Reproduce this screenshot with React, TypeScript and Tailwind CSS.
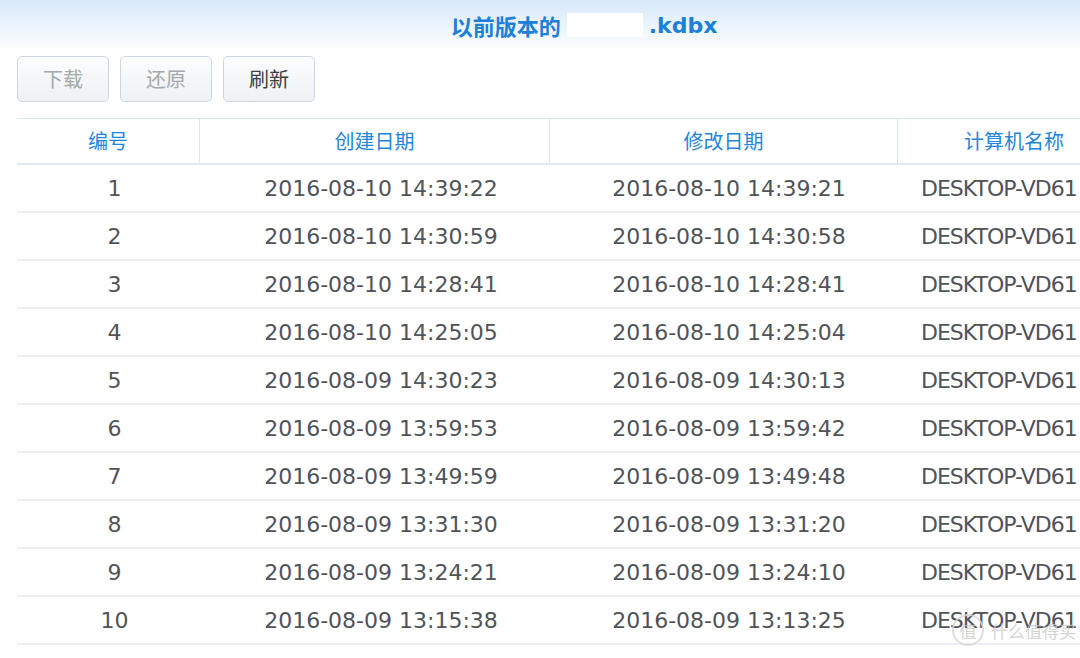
import React from 'react';

const rows = [
  ['1', '2016-08-10 14:39:22', '2016-08-10 14:39:21'],
  ['2', '2016-08-10 14:30:59', '2016-08-10 14:30:58'],
  ['3', '2016-08-10 14:28:41', '2016-08-10 14:28:41'],
  ['4', '2016-08-10 14:25:05', '2016-08-10 14:25:04'],
  ['5', '2016-08-09 14:30:23', '2016-08-09 14:30:13'],
  ['6', '2016-08-09 13:59:53', '2016-08-09 13:59:42'],
  ['7', '2016-08-09 13:49:59', '2016-08-09 13:49:48'],
  ['8', '2016-08-09 13:31:30', '2016-08-09 13:31:20'],
  ['9', '2016-08-09 13:24:21', '2016-08-09 13:24:10'],
  ['10', '2016-08-09 13:15:38', '2016-08-09 13:13:25'],
];

const cjk = "font-['Noto_Sans_CJK_SC',sans-serif]";
const num = "font-['DejaVu_Sans','Noto_Sans_CJK_SC',sans-serif]";

const Btn: React.FC<{ label: string; disabled?: boolean }> = ({ label, disabled }) => (
  <button
    className={`w-[92px] h-[46px] rounded-[5px] border border-[#cdd6df] bg-gradient-to-b from-[#fbfcfd] to-[#eef2f5] text-[20px] ${cjk} ${
      disabled ? 'text-[#a3a8ad]' : 'text-[#3a3f44]'
    }`}
  >
    {label}
  </button>
);

export default function App() {
  return (
    <div className="relative w-[1080px] h-[658px] overflow-hidden bg-white">
      {/* title */}
      <div className="h-[52px] bg-gradient-to-b from-[#d7e8f8] to-white flex items-center justify-center">
        <div className={`text-[22px] font-bold text-[#1d80d8] flex items-center ${cjk} ml-[88px] -mt-[2px]`}>
          <span>以前版本的</span>
          <span className="inline-block w-[76px] h-[24px] bg-white mx-[6px]"></span>
          <span className={num}>.kdbx</span>
        </div>
      </div>

      {/* toolbar */}
      <div className="flex gap-[11px] pl-[17px] mt-[4px]">
        <Btn label="下载" disabled />
        <Btn label="还原" disabled />
        <Btn label="刷新" />
      </div>

      {/* table */}
      <div className="ml-[17px] mt-[16px] w-[1300px] border-t border-[#dfe7ef]">
        <div className={`flex h-[46px] border-b-2 border-[#e3e9ef] text-[20px] text-[#1f86dc] ${cjk}`}>
          <div className="w-[183px] flex items-center justify-center border-r border-[#d9e5f1]">编号</div>
          <div className="w-[350px] flex items-center justify-center border-r border-[#d9e5f1]">创建日期</div>
          <div className="w-[348px] flex items-center justify-center border-r border-[#d9e5f1]">修改日期</div>
          <div className="w-[232px] flex items-center justify-center">计算机名称</div>
        </div>
        {rows.map((r) => (
          <div key={r[0]} className={`flex h-[48px] border-b-2 border-[#eceff3] text-[22px] text-[#505357] ${num}`}>
            <div className="w-[183px] flex items-center justify-center pl-[12px]">{r[0]}</div>
            <div className="w-[350px] flex items-center justify-center pl-[12px]">{r[1]}</div>
            <div className="w-[348px] flex items-center justify-center pl-[10px]">{r[2]}</div>
            <div className="w-[232px] flex items-center pl-[23px] whitespace-nowrap tracking-[-1px]">DESKTOP-VD61</div>
          </div>
        ))}
      </div>

      {/* watermark */}
      <div className={`absolute left-[952px] top-[614px] flex items-center gap-[7px] whitespace-nowrap text-[rgba(200,200,200,0.8)] ${cjk}`}>
        <span className="shrink-0 w-[32px] h-[32px] rounded-full border-2 border-[rgba(215,215,215,0.85)] flex items-center justify-center text-[17px] leading-none">值</span>
        <span className="shrink-0 text-[17px] leading-none">什么值得买</span>
      </div>
    </div>
  );
}
